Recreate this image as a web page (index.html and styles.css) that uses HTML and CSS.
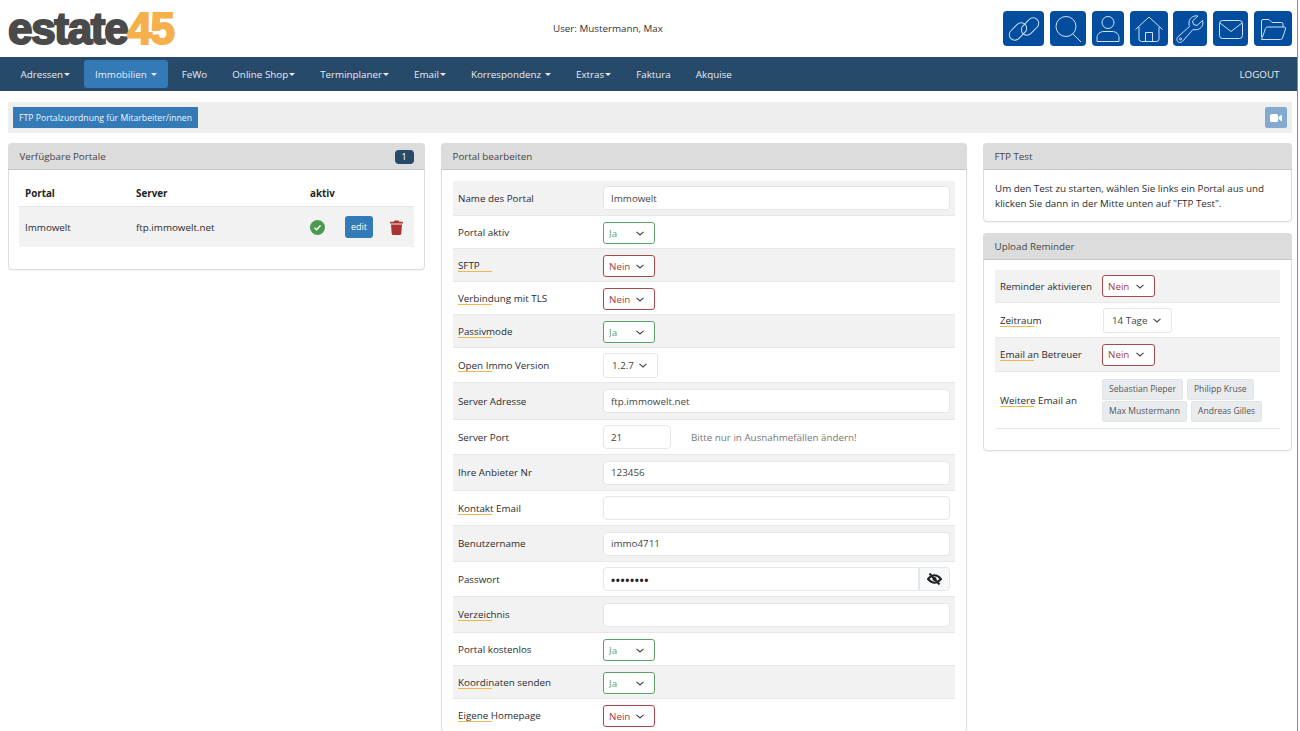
FILE: index.html
```html
<!DOCTYPE html>
<html lang="de">
<head>
    <meta charset="UTF-8">
    <meta name="viewport" content="width=device-width, initial-scale=1.0">
    <title>estate45 - FTP Portale</title>
    <link rel="stylesheet" href="styles.css">
</head>
<body>
<div class="page">
    <header class="top-bar">
        <div class="logo">estate<span class="logo-num">45</span></div>
        <div class="user-info">User: Mustermann, Max</div>
        <div class="icon-bar">
            <a class="icon-btn w41" href="#"><svg width="30" height="30" viewBox="0 0 30 30"><g transform="rotate(-45 15 15)"><rect x="-1" y="7" width="20" height="11" rx="5.5"/><rect x="11" y="12" width="20" height="11" rx="5.5"/></g></svg></a>
            <a class="icon-btn w36" href="#"><svg width="30" height="30" viewBox="0 0 30 30"><circle cx="13" cy="12.5" r="10"/><path d="M20 20 L28 28"/></svg></a>
            <a class="icon-btn w32" href="#"><svg width="30" height="30" viewBox="0 0 30 30"><circle cx="15" cy="8.5" r="6"/><path d="M4 27.5 V24 C4 20 7 17.5 11 17.5 H19 C23 17.5 26 20 26 24 V27.5 Z"/></svg></a>
            <a class="icon-btn w38" href="#"><svg width="30" height="30" viewBox="0 0 30 30"><path d="M1.5 15.5 L15 3 L28.5 15.5"/><path d="M5 13 V25 Q5 27.5 7.5 27.5 H22.5 Q25 27.5 25 25 V13"/><path d="M11.5 27.5 V18.5 H18.5 V27.5"/></svg></a>
            <a class="icon-btn w34" href="#"><svg width="30" height="30" viewBox="0 0 30 30"><path d="M27.5 6.5 L22 11.5 L18.5 10.5 L17.5 7 L23 2 C18 1 13.5 4.5 14 10 C14 11 14.2 11.8 14.5 12.5 L2.8 23 C1 25 2 27.5 3.5 28 C5 28.8 6.5 28.5 7.8 27 L18 15.5 C24 17 29.5 12.5 27.5 6.5 Z"/><circle cx="5.5" cy="25" r="1"/></svg></a>
            <a class="icon-btn w35" href="#"><svg width="30" height="30" viewBox="0 0 30 30"><rect x="3.5" y="6.5" width="23" height="18" rx="3"/><path d="M4 9 L15 17.5 L26 9"/></svg></a>
            <a class="icon-btn w38" href="#"><svg width="30" height="30" viewBox="0 0 30 30"><path d="M3.5 23 V7 Q3.5 5.5 5 5.5 H11 L14 8.5 H23.5 Q25 8.5 25 10 V13"/><path d="M3.5 25.5 L7.5 14.5 Q8 13 9.5 13 H26 Q28 13 27.5 15 L24.5 24 Q24 25.5 22.5 25.5 Z"/></svg></a>
        </div>
    </header>

    <nav class="main-nav">
        <a class="nav-item caret" href="#">Adressen</a>
        <a class="nav-item caret spaced active" href="#">Immobilien</a>
        <a class="nav-item" href="#">FeWo</a>
        <a class="nav-item caret" href="#">Online Shop</a>
        <a class="nav-item caret" href="#">Terminplaner</a>
        <a class="nav-item caret" href="#">Email</a>
        <a class="nav-item caret spaced" href="#">Korrespondenz</a>
        <a class="nav-item caret" href="#">Extras</a>
        <a class="nav-item" href="#">Faktura</a>
        <a class="nav-item" href="#">Akquise</a>
        <a class="nav-item logout" href="#">LOGOUT</a>
    </nav>

    <div class="tool-bar">
        <a class="btn-blue" href="#">FTP Portalzuordnung für Mitarbeiter/innen</a>
        <a class="btn-video" href="#"><svg width="12" height="10" viewBox="0 0 12 10"><rect x="0" y="1" width="8" height="8" rx="1.5"/><path d="M8.5 4 L12 1.5 V8.5 L8.5 6 Z"/></svg></a>
    </div>

    <main class="columns">
        <section class="card portals">
            <div class="card-head">Verfügbare Portale <span class="badge">1</span></div>
            <div class="card-body">
                <div class="portal-row portal-head">
                    <span>Portal</span><span>Server</span><span>aktiv</span>
                </div>
                <div class="portal-row portal-item">
                    <span>Immowelt</span>
                    <span>ftp.immowelt.net</span>
                    <svg class="check" width="15" height="15" viewBox="0 0 15 15"><circle cx="7.5" cy="7.5" r="7.5"/><path d="M4.5 7.8 L6.6 9.8 L10.5 5.5"/></svg>
                    <a class="btn-edit" href="#">edit</a>
                    <svg class="trash" width="13" height="15" viewBox="0 0 13 15"><path d="M4.5 0.5 H8.5 L9.2 1.7 H12.5 Q13 1.7 13 2.2 V3 Q13 3.5 12.5 3.5 H0.5 Q0 3.5 0 3 V2.2 Q0 1.7 0.5 1.7 H3.8 Z"/><path d="M1 4.5 H12 L11.3 13.5 Q11.2 15 9.8 15 H3.2 Q1.8 15 1.7 13.5 Z"/></svg>
                </div>
            </div>
        </section>

        <section class="card edit-portal">
            <div class="card-head">Portal bearbeiten</div>
            <div class="form-body">
                <div class="form-row h35"><label>Name des Portal</label><input class="field" value="Immowelt"></div>
                <div class="form-row h33"><label>Portal aktiv</label><select class="pick yes"><option>Ja</option></select></div>
                <div class="form-row h33"><label class="hint">SFTP</label><select class="pick no"><option>Nein</option></select></div>
                <div class="form-row h33"><label class="hint">Verbindung mit TLS</label><select class="pick no"><option>Nein</option></select></div>
                <div class="form-row h33"><label class="hint">Passivmode</label><select class="pick yes"><option>Ja</option></select></div>
                <div class="form-row h35"><label class="hint">Open Immo Version</label><select class="pick plain version"><option>1.2.7</option></select></div>
                <div class="form-row h37"><label>Server Adresse</label><input class="field" value="ftp.immowelt.net"></div>
                <div class="form-row h35"><label>Server Port</label><input class="field port" value="21"><span class="field-note">Bitte nur in Ausnahmefällen ändern!</span></div>
                <div class="form-row h36"><label>Ihre Anbieter Nr</label><input class="field" value="123456"></div>
                <div class="form-row h35"><label class="hint">Kontakt Email</label><input class="field"></div>
                <div class="form-row h36"><label>Benutzername</label><input class="field" value="immo4711"></div>
                <div class="form-row h35"><label>Passwort</label>
                    <div class="pass-group">
                        <input class="field" type="password" value="immo4711">
                        <span class="eye-btn"><svg width="15" height="12" viewBox="0 0 15 12"><path class="eye-shape" d="M1 6 Q7.5 -1.5 14 6 Q7.5 13.5 1 6 Z"/><circle class="eye-dot" cx="7.5" cy="6" r="2"/><path class="eye-line" d="M2.5 0.5 L12.5 11.5"/></svg></span>
                    </div>
                </div>
                <div class="form-row h36"><label class="hint">Verzeichnis</label><input class="field"></div>
                <div class="form-row h33"><label>Portal kostenlos</label><select class="pick yes"><option>Ja</option></select></div>
                <div class="form-row h33"><label class="hint">Koordinaten senden</label><select class="pick yes"><option>Ja</option></select></div>
                <div class="form-row h33"><label class="hint">Eigene Homepage</label><select class="pick no"><option>Nein</option></select></div>
            </div>
        </section>

        <div class="side-col">
            <section class="card">
                <div class="card-head">FTP Test</div>
                <p class="test-text">Um den Test zu starten, wählen Sie links ein Portal aus und klicken Sie dann in der Mitte unten auf "FTP Test".</p>
            </section>
            <section class="card reminder">
                <div class="card-head">Upload Reminder</div>
                <div class="reminder-body">
                    <div class="form-row h33"><label>Reminder aktivieren</label><select class="pick no"><option>Nein</option></select></div>
                    <div class="form-row h35"><label class="hint">Zeitraum</label><select class="pick plain days"><option>14 Tage</option></select></div>
                    <div class="form-row h34"><label class="hint">Email an Betreuer</label><select class="pick no"><option>Nein</option></select></div>
                    <div class="form-row tags-row"><label class="hint">Weitere Email an</label>
                        <div class="tags">
                            <span class="tag">Sebastian Pieper</span><span class="tag">Philipp Kruse</span>
                            <span class="tag">Max Mustermann</span><span class="tag">Andreas Gilles</span>
                        </div>
                    </div>
                </div>
            </section>
        </div>
    </main>
</div>
</body>
</html>
```

FILE: styles.css
```css
html, body {
    margin: 0;
    height: 731px;
    overflow: hidden;
    background: #fff;
}

body {
    font-family: "Open Sans", sans-serif;
    font-size: 9.8px;
    color: #2b2b2b;
}

a {
    text-decoration: none;
}

.page {
    width: 1297px;
    height: 731px;
    border-right: 1px solid #8a8a8a;
    overflow: hidden;
}

/* header */
.top-bar {
    display: flex;
    align-items: center;
    height: 57px;
    padding: 0 5px 0 8px;
    box-sizing: border-box;
}

.logo {
    width: 340px;
    font-family: "Liberation Sans", sans-serif;
    font-weight: 700;
    font-size: 44px;
    line-height: 44px;
    letter-spacing: -1.3px;
    color: #4a4a4a;
    -webkit-text-stroke: 2px currentColor;
}

.logo-num {
    color: #f5b04c;
}

.user-info {
    width: 655px;
    padding-left: 205px;
    box-sizing: border-box;
    color: #333;
}

.icon-bar {
    display: flex;
    gap: 5.83px;
    margin-left: auto;
}

.icon-btn {
    display: flex;
    align-items: center;
    justify-content: center;
    height: 35px;
    background: #034d9e;
    border-radius: 4px;
}

.icon-btn svg {
    fill: none;
    stroke: #cfe0f4;
    stroke-width: 1;
    overflow: visible;
}

.w41 { width: 41px; }
.w38 { width: 38px; }
.w36 { width: 36px; }
.w35 { width: 35px; }
.w34 { width: 34px; }
.w32 { width: 32px; }

/* navigation */
.main-nav {
    display: flex;
    align-items: center;
    gap: 2px;
    height: 34px;
    padding: 0 6px 0 9px;
    background: #27496a;
}

.nav-item {
    display: flex;
    align-items: center;
    height: 28px;
    padding: 0 11.5px;
    color: #e6edf3;
    border-radius: 3px;
}

.nav-item.active {
    background: #337ab7;
}

.caret::after {
    content: "";
    margin-left: 1px;
    border-top: 3.5px solid #e6edf3;
    border-left: 3px solid transparent;
    border-right: 3px solid transparent;
}

.spaced::after {
    margin-left: 4px;
}

.logout {
    margin-left: auto;
}

/* tool bar */
.tool-bar {
    display: flex;
    align-items: center;
    justify-content: space-between;
    height: 31px;
    margin: 11px 5px 0 8px;
    padding: 0 5px;
    background: #eee;
}

.btn-blue {
    display: flex;
    align-items: center;
    height: 21px;
    padding: 0 6px;
    font-size: 8.7px;
    background: #337ab7;
    color: #f0f6fb;
}

.btn-video {
    display: flex;
    align-items: center;
    justify-content: center;
    width: 22px;
    height: 21px;
    background: #84a9cf;
    border-radius: 2px;
}

.btn-video svg {
    fill: #fff;
}

/* columns */
.columns {
    display: grid;
    grid-template-columns: 417px 526px 309px;
    gap: 16px;
    align-items: start;
    margin: 10px 5px 0 8px;
}

.card {
    background: #fff;
    border: 1px solid #ddd;
    border-radius: 4px;
    box-shadow: 0 1px 1px rgba(0, 0, 0, 0.05);
}

.card-head {
    display: flex;
    align-items: center;
    justify-content: space-between;
    box-sizing: border-box;
    height: 27px;
    margin: -1px -1px 0;
    padding: 1px 11.5px 0;
    background: #dcdcdc;
    border-bottom: 1px solid #c8c8c8;
    border-radius: 4px 4px 0 0;
    color: #444;
}

.badge {
    width: 19px;
    height: 14px;
    line-height: 14px;
    text-align: center;
    background: #27496a;
    color: #fff;
    border-radius: 4px;
}

/* portal table */
.card-body {
    padding: 11px 10px 22px;
}

.portal-row {
    display: grid;
    grid-template-columns: 111px 174px 35px 45px 1fr;
    align-items: center;
    padding-left: 6px;
}

.portal-head {
    height: 25px;
    font-weight: 700;
    color: #222;
}

.portal-item {
    height: 41px;
    background: #f2f2f2;
    border-top: 1px solid #e6e6e6;
    box-sizing: border-box;
}

.check circle {
    fill: #4c9a50;
}

.check path {
    fill: none;
    stroke: #fff;
    stroke-width: 1.5;
}

.btn-edit {
    display: block;
    width: 28px;
    height: 22px;
    line-height: 22px;
    text-align: center;
    font-size: 9px;
    background: #337ab7;
    color: #fff;
    border-radius: 3px;
}

.trash {
    fill: #a83434;
}

/* forms */
.form-body {
    padding: 11px 11px 0;
}

.form-row {
    display: flex;
    align-items: center;
    padding-left: 5px;
    box-sizing: border-box;
    border-bottom: 1px solid #e8e8e8;
}

.form-row:nth-child(odd) {
    background: #f2f2f2;
}

.h33 { height: 33px; }
.h34 { height: 34px; }
.h35 { height: 35px; }
.h36 { height: 36px; }
.h37 { height: 37px; }

.form-row label {
    flex: none;
    width: 145px;
    color: #2b2b2b;
}

.reminder .form-row label {
    width: 102px;
}

/* the first part of these labels carries a coloured mark */
.form-row label.hint {
    background: linear-gradient(#f0b64e, #f0b64e) 0 100% / 34px 1px no-repeat;
}

.field {
    flex: 1;
    width: 100%;
    min-width: 0;
    height: 24px;
    margin-right: 5px;
    padding: 0 7px;
    box-sizing: border-box;
    font: inherit;
    color: #444;
    background: #fff;
    border: 1px solid #e3e6ea;
    border-radius: 4px;
    outline: none;
}

.port {
    flex: none;
    width: 68px;
    margin-right: 20px;
}

.field-note {
    color: #777;
}

.pick {
    width: 52px;
    height: 22px;
    margin-top: 2px;
    padding: 0 0 0 5px;
    box-sizing: border-box;
    font: inherit;
    background: #fff url("data:image/svg+xml,%3Csvg xmlns='http://www.w3.org/2000/svg' width='8' height='5' viewBox='0 0 8 5'%3E%3Cpath d='M0.5 0.8 L4 4 L7.5 0.8' fill='none' stroke='%23444' stroke-width='1.1'/%3E%3C/svg%3E") no-repeat right 10px center;
    border: 1px solid #ccc;
    border-radius: 3px;
    appearance: none;
    -webkit-appearance: none;
    outline: none;
}

.yes {
    color: #5f9f68;
    border-color: #5f9f68;
}

.no {
    color: #a04040;
    border-color: #a84a4a;
}

.reminder .no {
    width: 53px;
    margin-top: 0;
}

.plain {
    color: #444;
    border-color: #e3e6ea;
    height: 25px;
    margin-top: 0;
    padding-left: 8px;
}

.version {
    width: 55px;
}

.days {
    width: 69px;
    margin-left: 1px;
}

.pass-group {
    flex: 1;
    display: flex;
    margin-right: 5px;
}

.pass-group .field {
    margin-right: 0;
    border-radius: 4px 0 0 4px;
    font-size: 11px;
    font-weight: 700;
    letter-spacing: 0.6px;
    color: #222;
}

.eye-btn {
    display: flex;
    align-items: center;
    justify-content: center;
    flex: none;
    width: 31px;
    height: 24px;
    box-sizing: border-box;
    background: #f8f9fa;
    border: 1px solid #e3e6ea;
    border-radius: 0 4px 4px 0;
}

.eye-shape {
    fill: none;
    stroke: #222;
    stroke-width: 2;
}

.eye-dot {
    fill: #222;
}

.eye-line {
    stroke: #222;
    stroke-width: 2;
}

/* right column */
.side-col {
    display: flex;
    flex-direction: column;
    gap: 11px;
}

.test-text {
    margin: 0;
    padding: 11px 11px 10px;
    line-height: 15px;
}

.reminder-body {
    padding: 10px 11px 21px;
}

.tags-row {
    height: 57px;
}

.tags {
    display: flex;
    flex-wrap: wrap;
    gap: 1px 4px;
    width: 165px;
}

.tag {
    display: block;
    height: 21px;
    line-height: 19px;
    padding: 0 6px;
    font-size: 8.6px;
    color: #555;
    background: #e9ecef;
    border: 1px solid #e2e5e8;
    box-sizing: border-box;
    border-radius: 2px;
}
```
